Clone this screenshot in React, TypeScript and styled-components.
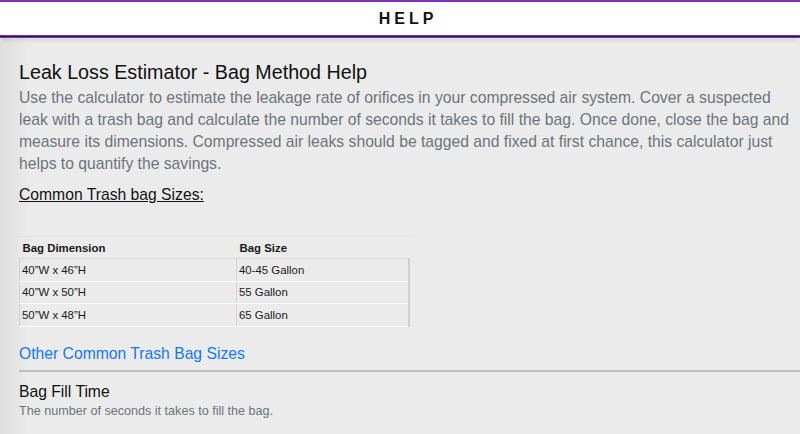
import React from "react";
import styled, { createGlobalStyle } from "styled-components";

const GlobalStyle = createGlobalStyle`
  html, body {
    margin: 0;
    padding: 0;
    background: #ebebeb;
  }
  body {
    font-family: "Liberation Sans", Arial, sans-serif;
  }
`;

const Page = styled.div`
  min-height: 434px;
  background: linear-gradient(to right, #dedede 0, #ebebeb 30px);
`;

const Header = styled.header`
  height: 33px;
  background: #fff;
  border-top: 2px solid #7a2fbf;
  display: flex;
  align-items: center;
  justify-content: center;
`;

const HeaderRule = styled.div`
  height: 1px;
  background: #2a1a3a;
  border-top: 1px solid #7a2fbf;
  border-bottom: 1px solid #7a2fbf;
  box-shadow: 0 2px 4px rgba(0, 0, 0, 0.12);
`;

const HeaderTitle = styled.h1`
  margin: 0 0 0 16px;
  font-size: 16px;
  font-weight: 700;
  letter-spacing: 4px;
  color: #111;
`;

const Content = styled.main`
  padding: 22px 8px 0 19px;
`;

const Title = styled.h2`
  margin: 0;
  font-size: 19.7px;
  font-weight: 400;
  color: #111;
  line-height: 24px;
`;

const Intro = styled.p`
  margin: 3px 0 0;
  font-size: 15.7px;
  line-height: 22px;
  color: #6c757d;
`;

const SubHeading = styled.h3`
  margin: 9px 0 0;
  font-size: 15.7px;
  font-weight: 400;
  line-height: 22px;
  color: #111;
  text-decoration: underline;
`;

const Table = styled.table`
  margin-top: 30px;
  width: 391px;
  border-collapse: collapse;
  font-size: 11.4px;
  color: #1a1a1a;
  border-top: 1px solid #e2e2e2;
`;

const HeadCell = styled.th<{ $width?: number }>`
  text-align: left;
  font-weight: 700;
  padding: 4px 3px 4px;
  height: 13px;
  width: ${(p) => (p.$width ? `${p.$width}px` : "auto")};
`;

const Cell = styled.td<{ $last?: boolean }>`
  padding: 4px 3px 4px 2px;
  height: 13.5px;
  border-left: 1px solid #d4d4d4;
  border-top: 1px solid #dcdcdc;
  border-bottom: 1px solid #f8f8f8;
  border-right: ${(p) => (p.$last ? "2px solid #d0d0d0" : "0")};
`;

const Link = styled.a`
  display: block;
  margin-top: 17px;
  font-size: 15.7px;
  line-height: 20px;
  color: #1478f0;
  text-decoration: none;
`;

const Rule = styled.hr`
  margin: 6px -8px 0 0;
  border: 0;
  border-top: 2px solid #bdbdbd;
`;

const FieldLabel = styled.div`
  margin-top: 9px;
  font-size: 15.7px;
  line-height: 22px;
  color: #111;
`;

const FieldHint = styled.div`
  font-size: 12.6px;
  line-height: 16px;
  color: #6c757d;
`;

const rows = [
  ["40\u201DW x 46\u201DH", "40-45 Gallon"],
  ["40\u201DW x 50\u201DH", "55 Gallon"],
  ["50\u201DW x 48\u201DH", "65 Gallon"],
];

export default function App() {
  return (
    <Page>
      <GlobalStyle />
      <Header>
        <HeaderTitle>HELP</HeaderTitle>
      </Header>
      <HeaderRule />
      <Content>
        <Title>Leak Loss Estimator - Bag Method Help</Title>
        <Intro>
          Use the calculator to estimate the leakage rate of orifices in your
          compressed air system. Cover a suspected leak with a trash bag and
          calculate the number of seconds it takes to fill the bag. Once done,
          close the bag and measure its dimensions. Compressed air leaks should
          be tagged and fixed at first chance, this calculator just helps to
          quantify the savings.
        </Intro>
        <SubHeading>Common Trash bag Sizes:</SubHeading>
        <Table>
          <thead>
            <tr>
              <HeadCell $width={211}>Bag Dimension</HeadCell>
              <HeadCell>Bag Size</HeadCell>
            </tr>
          </thead>
          <tbody>
            {rows.map(([dim, size]) => (
              <tr key={dim}>
                <Cell>{dim}</Cell>
                <Cell $last>{size}</Cell>
              </tr>
            ))}
          </tbody>
        </Table>
        <Link href="#">Other Common Trash Bag Sizes</Link>
        <Rule />
        <FieldLabel>Bag Fill Time</FieldLabel>
        <FieldHint>The number of seconds it takes to fill the bag.</FieldHint>
      </Content>
    </Page>
  );
}
